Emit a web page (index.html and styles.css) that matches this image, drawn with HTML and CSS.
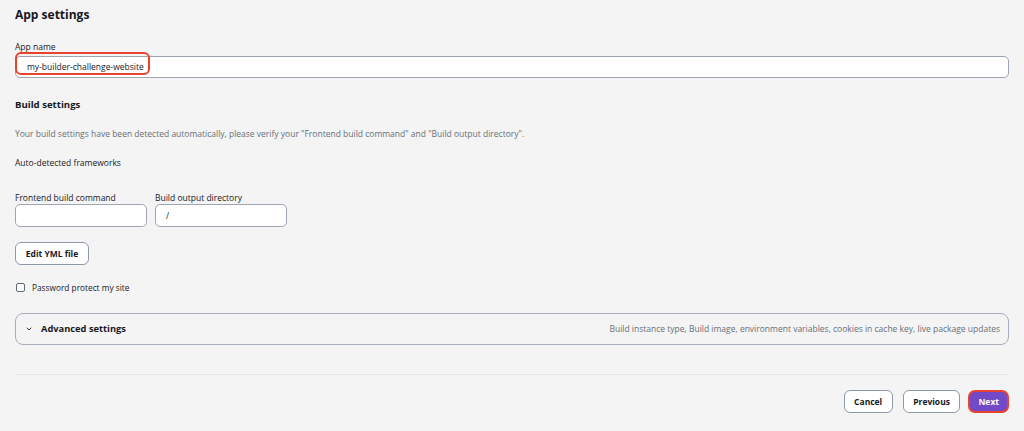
FILE: index.html
```html
<!DOCTYPE html>
<html lang="en">
  <head>
    <meta charset="UTF-8" />
    <meta name="viewport" content="width=device-width, initial-scale=1.0" />
    <title>App settings</title>
    <link rel="stylesheet" href="styles.css">
  </head>
  <body>
    <main class="page">
      <h1 class="page-title">App settings</h1>

      <div class="field">
        <label class="field-label" for="app-name">App name</label>
        <div class="input-wrap">
          <input class="text-input app-input" id="app-name" type="text" value="my-builder-challenge-website" />
          <span class="highlight highlight-name"></span>
        </div>
      </div>

      <h2 class="section-title">Build settings</h2>
      <p class="hint">Your build settings have been detected automatically, please verify your "Frontend build command" and "Build output directory".</p>
      <p class="plain">Auto-detected frameworks</p>

      <div class="build-row">
        <div class="field small">
          <label class="field-label" for="frontend-cmd">Frontend build command</label>
          <input class="text-input short-input" id="frontend-cmd" type="text" />
        </div>
        <div class="field small">
          <label class="field-label" for="output-dir">Build output directory</label>
          <input class="text-input short-input" id="output-dir" type="text" value="/" />
        </div>
      </div>

      <button type="button" class="btn yml-btn">Edit YML file</button>

      <label class="check-row">
        <span class="check-box"></span>
        <span>Password protect my site</span>
      </label>

      <!-- Advanced settings (collapsed) -->
      <div class="expander">
        <div class="expander-left">
          <svg class="chevron" width="6" height="4" viewBox="0 0 6 4">
            <path d="M1 1l2 2 2-2" fill="none" stroke="#333" stroke-width="1" stroke-linecap="round" />
          </svg>
          <span class="expander-title">Advanced settings</span>
        </div>
        <span class="expander-desc">Build instance type, Build image, environment variables, cookies in cache key, live package updates</span>
      </div>

      <hr class="divider" />

      <div class="actions">
        <button type="button" class="btn">Cancel</button>
        <button type="button" class="btn">Previous</button>
        <button type="button" class="btn btn-primary">Next</button>
      </div>
    </main>
  </body>
</html>
```

FILE: styles.css
```css
body {
  font-family: "Open Sans", Arial, sans-serif;
  background-color: #f4f4f4;
  color: #16191f;
  margin: 0;
}

.page {
  padding: 6px 15px 0 15px;
}

.page-title {
  font-size: 12px;
  font-weight: 700;
  margin: 0 0 18px 0;
  line-height: 18px;
}

.field {
  display: flex;
  flex-direction: column;
}

.field-label {
  font-size: 8.5px;
  line-height: 10px;
  margin-bottom: 1px;
  color: #16191f;
}

.input-wrap {
  position: relative;
}

.text-input {
  box-sizing: border-box;
  height: 22px;
  border: 1px solid #9ea6b4;
  border-radius: 5px;
  background: #fff;
  font-family: inherit;
  font-size: 8.5px;
  padding: 0 10px;
  color: #16191f;
  outline: none;
}

.app-input {
  width: 100%;
  padding-left: 11px;
}

/* red annotation around the app name */
.highlight {
  position: absolute;
  border: 2px solid #e8432f;
  border-radius: 6px;
  pointer-events: none;
}

.highlight-name {
  left: 0;
  top: -1px;
  width: 131px;
  height: 19px;
}

.section-title {
  font-size: 9.6px;
  font-weight: 700;
  line-height: 14px;
  margin: 20px 0 0 0;
}

.hint {
  font-size: 8.5px;
  line-height: 12px;
  color: #687078;
  margin: 16px 0 0 0;
}

.plain {
  font-size: 8.5px;
  line-height: 12px;
  margin: 17px 0 0 0;
}

.build-row {
  display: flex;
  gap: 8px;
  margin-top: 24px;
}

.short-input {
  width: 132px;
  height: 23px;
}

.btn {
  box-sizing: border-box;
  height: 23px;
  padding: 0 10px;
  background: #fff;
  border: 1px solid #8d99a8;
  border-radius: 6px;
  font-family: inherit;
  font-size: 8.5px;
  font-weight: 700;
  color: #16191f;
  white-space: nowrap;
  cursor: pointer;
}

.yml-btn {
  display: block;
  width: 74px;
  padding: 0;
  margin-top: 15px;
}

.check-row {
  display: flex;
  align-items: center;
  gap: 7px;
  margin-top: 17px;
  font-size: 8.3px;
  line-height: 12px;
}

.check-box {
  box-sizing: border-box;
  width: 9px;
  height: 9px;
  margin-left: 1px;
  border: 1px solid #5f6b7a;
  border-radius: 2px;
  background: #fff;
}

.expander {
  box-sizing: border-box;
  display: flex;
  justify-content: space-between;
  align-items: center;
  height: 32px;
  margin-top: 19px;
  padding: 0 8px 0 10px;
  border: 1px solid #a7afbb;
  border-radius: 8px;
}

.expander-left {
  display: flex;
  align-items: center;
  gap: 9px;
}

.expander-title {
  font-size: 9.3px;
  font-weight: 700;
}

.expander-desc {
  font-size: 8.5px;
  color: #687078;
}

.divider {
  border: none;
  border-top: 1px solid #e4e4e4;
  margin: 29px 0 0 0;
}

.actions {
  display: flex;
  justify-content: flex-end;
  gap: 10px;
  margin-top: 15px;
}

.actions .btn {
  padding: 0 9.5px;
}

.actions .btn-primary {
  background: #7249c6;
  color: #fff;
  border: 2px solid #e8432f;
  border-radius: 7px;
  padding: 0 8px;
  margin-left: -2px;
}
```
